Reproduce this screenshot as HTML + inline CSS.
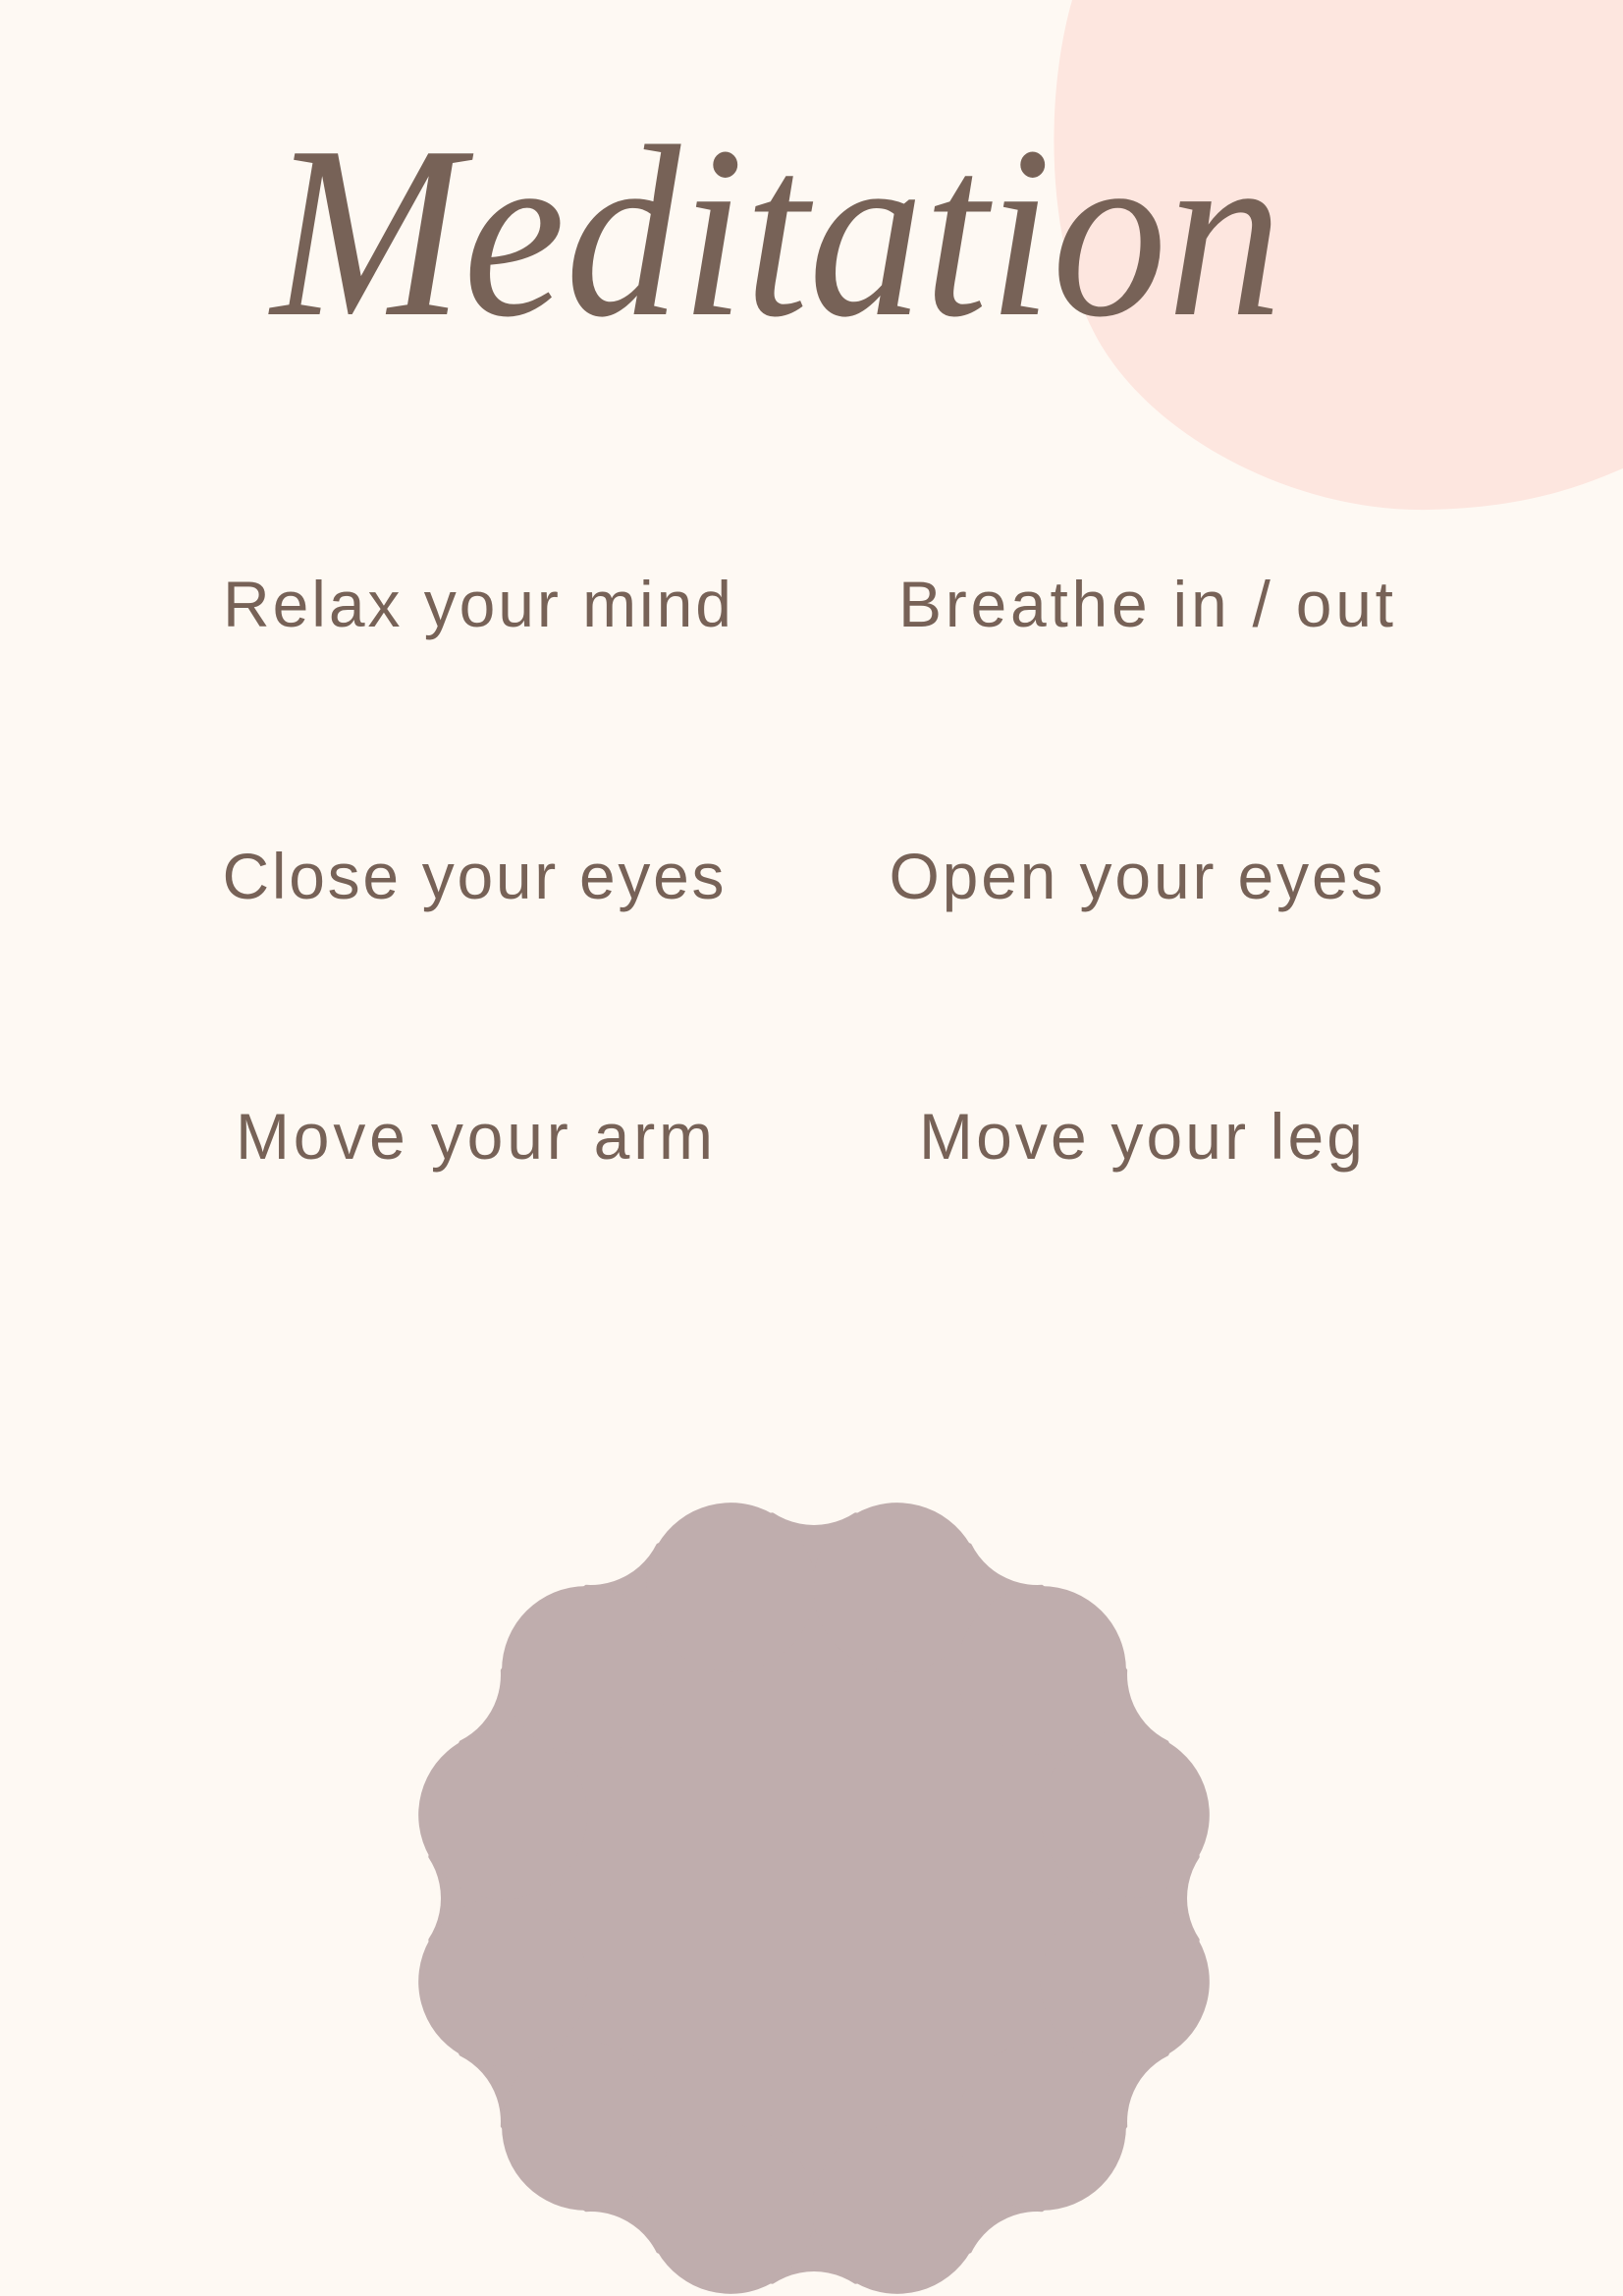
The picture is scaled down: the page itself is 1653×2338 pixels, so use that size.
<!DOCTYPE html>
<html><head><meta charset="utf-8"><style>
html,body{margin:0;padding:0;background:#fef9f3;}
svg{display:block}
</style></head><body>
<svg width="1653" height="2338" viewBox="0 0 1653 2338" xmlns="http://www.w3.org/2000/svg">
<defs>
<mask id="m" maskUnits="userSpaceOnUse" x="0" y="0" width="1653" height="2338">
<rect width="1653" height="2338" fill="#fff"/>
<g fill="#000">
<circle cx="829" cy="1478" r="75" transform="rotate(0 829 1933)"/>
<circle cx="829" cy="1478" r="75" transform="rotate(30 829 1933)"/>
<circle cx="829" cy="1478" r="75" transform="rotate(60 829 1933)"/>
<circle cx="829" cy="1478" r="75" transform="rotate(90 829 1933)"/>
<circle cx="829" cy="1478" r="75" transform="rotate(120 829 1933)"/>
<circle cx="829" cy="1478" r="75" transform="rotate(150 829 1933)"/>
<circle cx="829" cy="1478" r="75" transform="rotate(180 829 1933)"/>
<circle cx="829" cy="1478" r="75" transform="rotate(210 829 1933)"/>
<circle cx="829" cy="1478" r="75" transform="rotate(240 829 1933)"/>
<circle cx="829" cy="1478" r="75" transform="rotate(270 829 1933)"/>
<circle cx="829" cy="1478" r="75" transform="rotate(300 829 1933)"/>
<circle cx="829" cy="1478" r="75" transform="rotate(330 829 1933)"/>
</g>
</mask>
</defs>
<rect width="1653" height="2338" fill="#fef9f3"/>
<path d="M1092,0 C1066,90 1062,240 1115,340 C1170,445 1320,522 1455,519 C1545,517 1600,500 1653,477 L1653,0 Z" fill="#fde6df"/>
<text x="276" y="320" textLength="1030" lengthAdjust="spacingAndGlyphs" font-family="Liberation Serif, serif" font-style="italic" font-size="250" fill="#776257">Meditation</text>
<g font-family="Liberation Sans, sans-serif" font-size="66" fill="#776257" text-anchor="middle">
<text x="486" y="638" textLength="518" lengthAdjust="spacing">Relax your mind</text>
<text x="1167" y="638" textLength="504" lengthAdjust="spacing">Breathe in / out</text>
<text x="482" y="915" textLength="511" lengthAdjust="spacing">Close your eyes</text>
<text x="1157" y="915" textLength="503" lengthAdjust="spacing">Open your eyes</text>
<text x="483" y="1180" textLength="486" lengthAdjust="spacing">Move your arm</text>
<text x="1162" y="1180" textLength="452" lengthAdjust="spacing">Move your leg</text>
</g>
<g fill="#bfadad">
<circle cx="829" cy="1933" r="395" mask="url(#m)"/>
<circle cx="829" cy="1605" r="86" transform="rotate(15 829 1933)"/>
<circle cx="829" cy="1605" r="86" transform="rotate(45 829 1933)"/>
<circle cx="829" cy="1605" r="86" transform="rotate(75 829 1933)"/>
<circle cx="829" cy="1605" r="86" transform="rotate(105 829 1933)"/>
<circle cx="829" cy="1605" r="86" transform="rotate(135 829 1933)"/>
<circle cx="829" cy="1605" r="86" transform="rotate(165 829 1933)"/>
<circle cx="829" cy="1605" r="86" transform="rotate(195 829 1933)"/>
<circle cx="829" cy="1605" r="86" transform="rotate(225 829 1933)"/>
<circle cx="829" cy="1605" r="86" transform="rotate(255 829 1933)"/>
<circle cx="829" cy="1605" r="86" transform="rotate(285 829 1933)"/>
<circle cx="829" cy="1605" r="86" transform="rotate(315 829 1933)"/>
<circle cx="829" cy="1605" r="86" transform="rotate(345 829 1933)"/>
</g>
</svg>
</body></html>
